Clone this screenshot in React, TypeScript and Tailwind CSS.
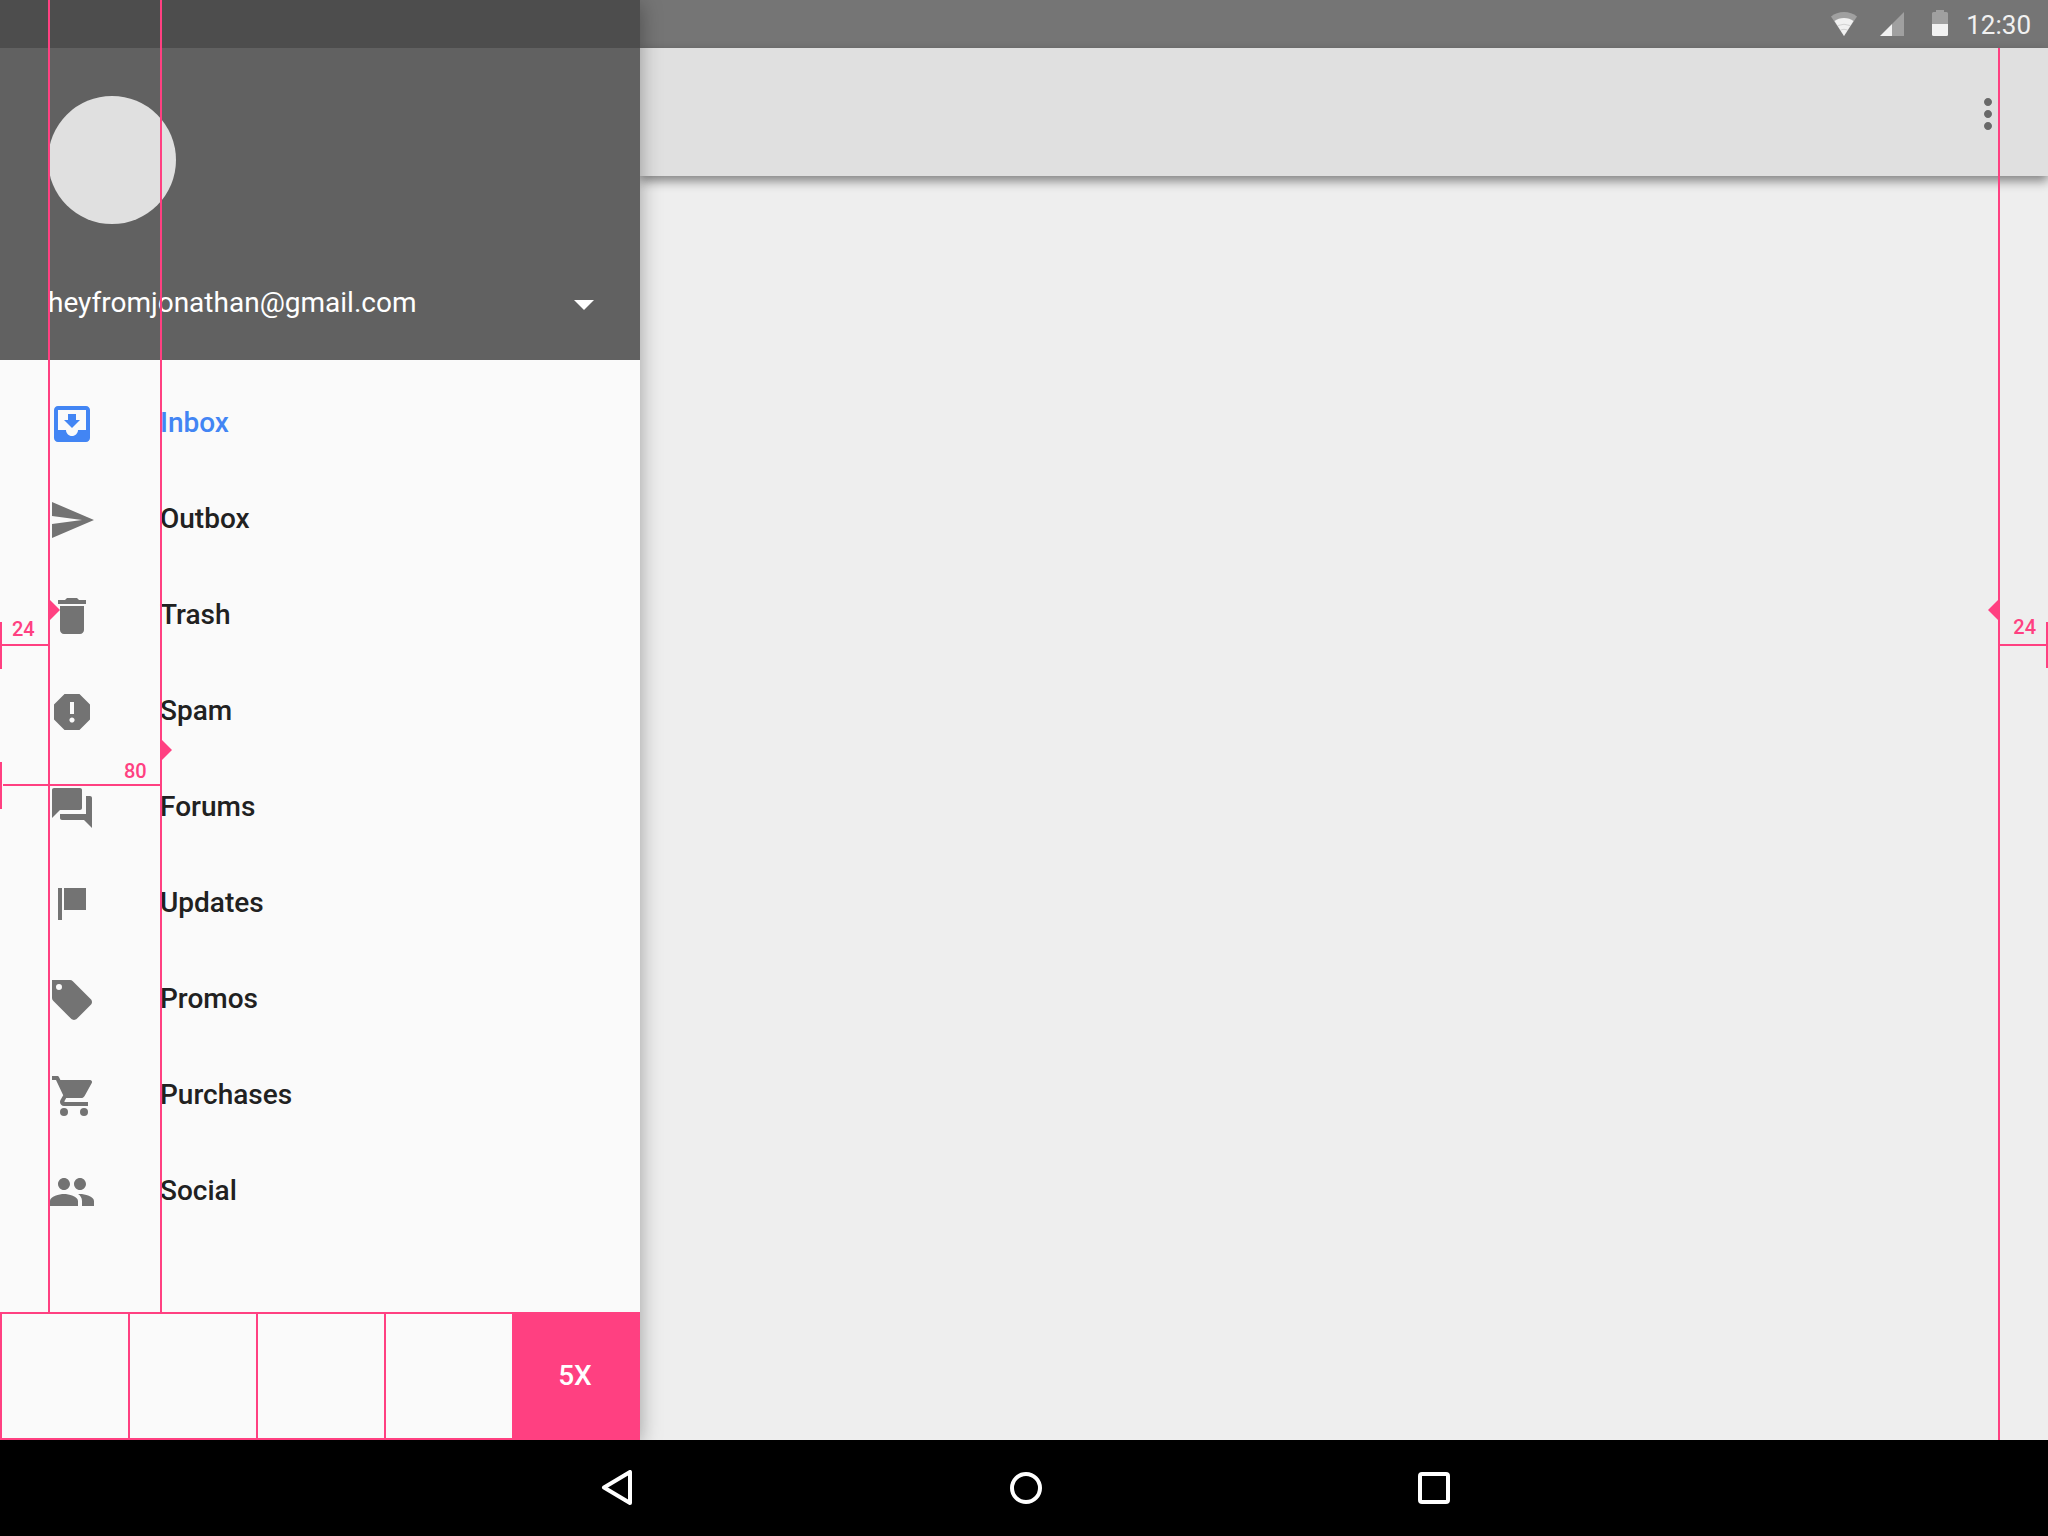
import React from "react";
import {
  MdArrowDropDown,
  MdDelete,
  MdForum,
  MdMoreVert,
  MdMoveToInbox,
  MdPeople,
  MdReport,
  MdSend,
} from "react-icons/md";

type IconProps = { className?: string };

function FlagIcon({ className }: IconProps) {
  return (
    <svg viewBox="0 0 24 24" fill="currentColor" className={className} aria-hidden="true">
      <path d="M5 4h2v16H5zM8 4h11v11H8z" />
    </svg>
  );
}

function TagIcon({ className }: IconProps) {
  return (
    <svg viewBox="0 0 24 24" fill="currentColor" className={className} aria-hidden="true">
      <path
        fillRule="evenodd"
        d="M2 2h9c.55 0 1.050.22 1.410.59l9 9c.37.36.59.86.59 1.410s-.22 1.050-.59 1.410l-7 7c-.36.37-.86.59-1.410.59s-1.050-.22-1.410-.59l-9-9C2.220 12.050 2 11.550 2 11zM5.500 4a1.500 1.500 0 1 0 0 3a1.500 1.500 0 0 0 0-3z"
      />
    </svg>
  );
}

function CartIcon({ className }: IconProps) {
  return (
    <svg viewBox="0 0 24 24" fill="currentColor" className={className} aria-hidden="true">
      <circle cx="8" cy="20" r="2" />
      <circle cx="18" cy="20" r="2" />
      <path d="M2 2v2h2l3.600 7.590-1.350 2.450C6.090 14.320 6 14.650 6 15c0 1.100.9 2 2 2h12v-2H8.420c-.14 0-.25-.11-.25-.25l.03-.12.9-1.630h7.450c.75 0 1.410-.41 1.750-1.030l3.580-6.490A1 1 0 0 0 21 4H6.210L5.540 2.570C5.380 2.230 5 2 4.640 2z" />
    </svg>
  );
}

const items: { label: string; icon: React.ComponentType<IconProps>; active?: boolean }[] = [
  { label: "Inbox", icon: MdMoveToInbox, active: true },
  { label: "Outbox", icon: MdSend },
  { label: "Trash", icon: MdDelete },
  { label: "Spam", icon: MdReport },
  { label: "Forums", icon: MdForum },
  { label: "Updates", icon: FlagIcon },
  { label: "Promos", icon: TagIcon },
  { label: "Purchases", icon: CartIcon },
  { label: "Social", icon: MdPeople },
];

function StatusBar() {
  return (
    <div className="flex h-12 items-center justify-end bg-[#757575] pr-[17px] text-[#f1f1f1]">
      <svg viewBox="0 0 26 48" className="mr-[23px] h-12 w-[26px]" fill="currentColor" aria-hidden="true">
        <path opacity="0.35" d="M0 16.500C3.500 13.500 8 12 13 12s9.500 1.500 13 4.500L13 36z" />
        <path d="M3.500 21C6 19 9.300 18 13 18s7 1 9.500 3L13 36z" />
        <path d="M7 25.500q6-2.500 12 0M9.500 30q3.500-1.500 7 0" fill="none" stroke="#757575" strokeOpacity="0.25" />
      </svg>
      <svg viewBox="0 0 24 48" className="mr-7 h-12 w-6" fill="currentColor" aria-hidden="true">
        <path opacity="0.35" d="M24 12v24H12V24z" />
        <path d="M12 24v12H0z" />
      </svg>
      <svg viewBox="0 0 16 48" className="mr-[18px] h-12 w-4" fill="currentColor" aria-hidden="true">
        <path opacity="0.35" d="M4 10h8v2h2.500q1.500 0 1.500 1.500V24H0V13.500Q0 12 1.500 12H4z" />
        <path d="M0 24h16v10.500q0 1.500-1.500 1.500h-13Q0 36 0 34.500z" />
      </svg>
      <time className="pt-0.5 text-[26px] leading-8">12:30</time>
    </div>
  );
}

function DrawerHeader() {
  return (
    <header className="bg-[#616161]">
      <div className="h-12 bg-[#4d4d4d]" />
      <div className="pt-12 pr-8 pb-8 pl-12">
        <div className="size-32 rounded-full bg-[#e0e0e0]" />
        <button type="button" className="mt-14 flex h-12 w-full items-center justify-between text-[28px] text-white">
          <span className="pb-0.5 leading-8">heyfromjonathan@gmail.com</span>
          <MdArrowDropDown className="size-12" />
        </button>
      </div>
    </header>
  );
}

function DrawerNav() {
  return (
    <nav className="py-4">
      <ul>
        {items.map(({ label, icon: Icon, active }) => (
          <li key={label}>
            <a
              href="#"
              aria-current={active ? "page" : undefined}
              className={
                active
                  ? "flex h-24 items-center gap-16 pl-12 text-[#4285f4]"
                  : "flex h-24 items-center gap-16 pl-12 text-[#212121]"
              }
            >
              <Icon className={active ? "size-12" : "size-12 text-[#737373]"} />
              <span className="pb-0.5 text-[28px] leading-8 font-medium">{label}</span>
            </a>
          </li>
        ))}
      </ul>
    </nav>
  );
}

function WidthScale() {
  return (
    <div className="mt-auto grid h-32 grid-cols-5 border-y-2 border-[#ff4081]">
      <div className="border-l-2 border-[#ff4081]" />
      <div className="border-l-2 border-[#ff4081]" />
      <div className="border-l-2 border-[#ff4081]" />
      <div className="border-l-2 border-[#ff4081]" />
      <div className="flex items-center justify-center bg-[#ff4081] pr-0.5 text-[28px] leading-8 font-medium text-white">
        5X
      </div>
    </div>
  );
}

function DrawerGuides() {
  return (
    <div className="pointer-events-none absolute inset-0 text-[20px] leading-6 font-medium text-[#ff4081]">
      <div className="absolute top-0 bottom-32 left-12 w-0.5 bg-[#ff4081]" />
      <div className="absolute top-0 bottom-32 left-40 w-0.5 bg-[#ff4081]" />

      <svg viewBox="0 0 10 20" className="absolute top-[600px] left-[50px] h-5 w-2.5" fill="currentColor">
        <path d="M0 0l10 10L0 20z" />
      </svg>
      <div className="absolute top-[622px] left-0 h-[47px] w-0.5 bg-[#ff4081]" />
      <div className="absolute top-[644px] left-0 h-0.5 w-12 bg-[#ff4081]" />
      <span className="absolute top-[617px] left-3">24</span>

      <svg viewBox="0 0 10 20" className="absolute top-[740px] left-[162px] h-5 w-2.5" fill="currentColor">
        <path d="M0 0l10 10L0 20z" />
      </svg>
      <div className="absolute top-[762px] left-0 h-[47px] w-0.5 bg-[#ff4081]" />
      <div className="absolute top-[784px] left-[3px] h-0.5 w-[157px] bg-[#ff4081]" />
      <span className="absolute top-[759px] left-[124px]">80</span>
    </div>
  );
}

function ContentGuides() {
  return (
    <div className="pointer-events-none absolute inset-0 text-[20px] leading-6 font-medium text-[#ff4081]">
      <div className="absolute top-12 right-12 bottom-0 w-0.5 bg-[#ff4081]" />
      <svg viewBox="0 0 10 20" className="absolute top-[600px] right-[50px] h-5 w-2.5" fill="currentColor">
        <path d="M10 0L0 10l10 10z" />
      </svg>
      <div className="absolute top-[622px] right-0 h-[46px] w-0.5 bg-[#ff4081]" />
      <div className="absolute top-[644px] right-0 h-0.5 w-12 bg-[#ff4081]" />
      <span className="absolute top-[615px] right-3">24</span>
    </div>
  );
}

function SystemNav() {
  return (
    <footer className="flex h-24 items-center justify-center bg-black pl-1 text-white">
      <button type="button" aria-label="Back" className="flex w-[408px] justify-center">
        <svg viewBox="0 0 36 36" className="size-9" fill="none" stroke="currentColor" strokeWidth="4" strokeLinejoin="round">
          <path d="M30 2v31L4 17.500z" />
        </svg>
      </button>
      <button type="button" aria-label="Home" className="flex w-[408px] justify-center">
        <span className="size-8 rounded-full border-4 border-white" />
      </button>
      <button type="button" aria-label="Recent apps" className="flex w-[408px] justify-center">
        <span className="size-8 rounded-[4px] border-4 border-white" />
      </button>
    </footer>
  );
}

export default function App() {
  return (
    <div className="flex min-h-screen flex-col bg-[#eeeeee] font-[Roboto,sans-serif]">
      <div className="flex flex-1">
        <aside className="relative z-10 flex w-[640px] shrink-0 flex-col bg-[#fafafa] shadow-[0_4px_20px_rgba(0,0,0,0.35)]">
          <DrawerHeader />
          <DrawerNav />
          <WidthScale />
          <DrawerGuides />
        </aside>
        <main className="relative flex flex-1 flex-col">
          <StatusBar />
          <div className="flex h-32 items-center justify-end bg-[#e0e0e0] pt-1 pr-9 shadow-[0_5px_10px_rgba(0,0,0,0.45)]">
            <button type="button" aria-label="More options" className="text-[#696969]">
              <MdMoreVert className="size-12" />
            </button>
          </div>
          <ContentGuides />
        </main>
      </div>
      <SystemNav />
    </div>
  );
}
